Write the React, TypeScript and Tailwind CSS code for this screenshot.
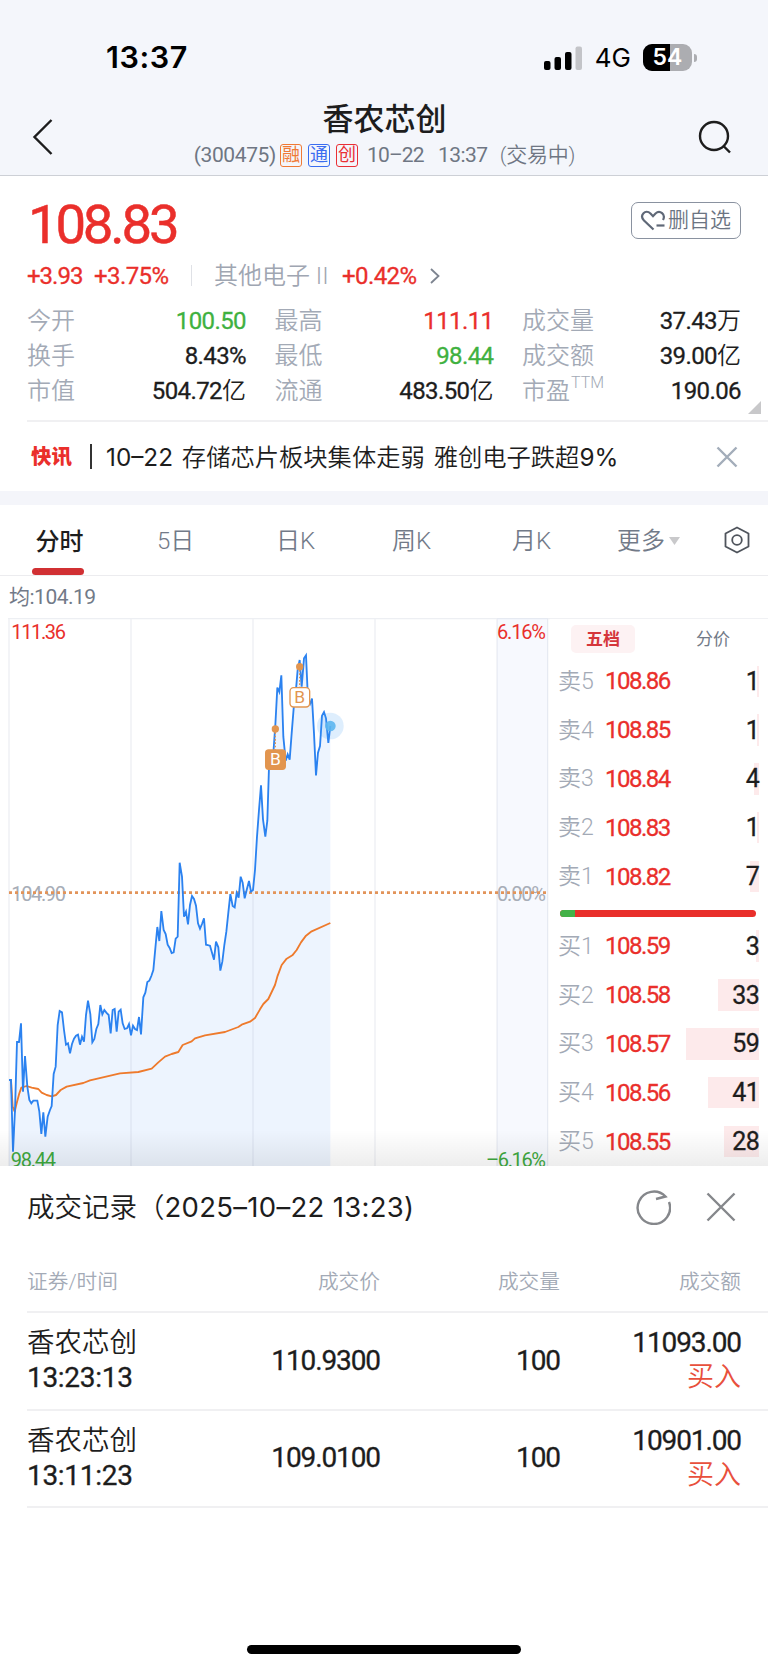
import React from "react";

const quotes = [
	[
		{ label: "今开", value: "100.50", color: "text-[#3fb13f]" },
		{ label: "换手", value: "8.43%", color: "text-[#1d1d1d]" },
		{ label: "市值", value: "504.72", unit: "亿", color: "text-[#1d1d1d]" },
	],
	[
		{ label: "最高", value: "111.11", color: "text-[#ea2f2b]" },
		{ label: "最低", value: "98.44", color: "text-[#3fb13f]" },
		{ label: "流通", value: "483.50", unit: "亿", color: "text-[#1d1d1d]" },
	],
	[
		{ label: "成交量", value: "37.43", unit: "万", color: "text-[#1d1d1d]" },
		{ label: "成交额", value: "39.00", unit: "亿", color: "text-[#1d1d1d]" },
		{ label: "市盈", sup: "TTM", value: "190.06", color: "text-[#1d1d1d]" },
	],
];

const asks = [
	{ label: "卖5", price: "108.86", qty: 1, bar: 2 },
	{ label: "卖4", price: "108.85", qty: 1, bar: 2 },
	{ label: "卖3", price: "108.84", qty: 4, bar: 5 },
	{ label: "卖2", price: "108.83", qty: 1, bar: 2 },
	{ label: "卖1", price: "108.82", qty: 7, bar: 9 },
];

const bids = [
	{ label: "买1", price: "108.59", qty: 3, bar: 3 },
	{ label: "买2", price: "108.58", qty: 33, bar: 41 },
	{ label: "买3", price: "108.57", qty: 59, bar: 73 },
	{ label: "买4", price: "108.56", qty: 41, bar: 51 },
	{ label: "买5", price: "108.55", qty: 28, bar: 35 },
];

const trades = [
	{ name: "香农芯创", time: "13:23:13", price: "110.9300", qty: "100", amount: "11093.00" },
	{ name: "香农芯创", time: "13:11:23", price: "109.0100", qty: "100", amount: "10901.00" },
];

const priceLine =
	"27,1386 33,1386 39,1601 45,1476 51,1272 57,1272 63,1216 69,1421 75,1314 82,1406 88,1446 94,1456 100,1448 112,1448 118,1481 124,1548 130,1483 136,1556 143,1496 150,1476 155,1464 161,1368 167,1346 173,1221 179,1179 186,1183 192,1236 198,1280 204,1276 210,1306 216,1278 222,1262 228,1253 234,1250 240,1280 246,1256 252,1271 258,1191 264,1148 271,1188 277,1273 283,1263 289,1233 295,1218 301,1161 307,1189 313,1176 319,1184 326,1191 332,1246 338,1176 344,1173 350,1241 356,1181 362,1175 368,1216 374,1233 381,1231 387,1218 393,1252 399,1223 405,1233 411,1236 417,1197 423,1249 430,1138 436,1124 442,1092 448,1088 454,1074 460,1056 466,991 472,927 478,969 484,879 491,936 497,948 503,980 509,990 515,1005 521,1003 527,962 533,956 539,734 546,776 552,896 558,881 564,919 570,861 576,834 582,843 588,863 594,916 600,932 606,918 612,901 618,980 630,983 636,1004 642,1025 648,971 655,988 661,1058 667,1031 673,981 679,941 685,884 691,828 698,864 704,868 710,825 716,839 722,776 728,794 734,841 740,816 747,789 753,821 759,816 765,756 771,656 777,576 783,502 789,604 796,656 802,608 807,446 813,426 820,406 826,321 832,209 838,222 844,172 850,356 857,428 863,409 869,425 875,346 881,271 887,226 893,156 899,126 905,206 912,121 918,112 924,246 930,258 936,242 942,346 948,472 954,404 960,384 966,293 972,282 978,301 985,375 991,324";

const avgLine =
	"27,1386 33,1386 38,1466 44,1481 50,1456 58,1426 64,1409 80,1404 95,1409 115,1413 125,1424 140,1431 155,1435 168,1431 182,1416 200,1406 250,1395 270,1387 360,1366 415,1362 455,1352 475,1333 495,1316 515,1308 535,1302 548,1281 575,1270 585,1261 615,1252 675,1242 715,1227 725,1220 750,1211 765,1200 780,1174 790,1158 805,1143 825,1101 832,1076 845,1041 860,1022 877,1012 890,996 903,973 918,953 935,940 991,915";

const StatusBar = () => (
	<div className="flex h-[88px] items-end justify-between pl-[106px] pr-[71px] font-['Inter'] text-black">
		<span className="mb-[16px] text-[30.5px] font-semibold leading-[30px] tracking-[0.6px]">13:37</span>
		<div className="mb-[17px] flex items-center">
			<svg width="39" height="24" viewBox="0 0 39 24">
				<rect x="0" y="15" width="6.5" height="9" rx="2" />
				<rect x="10.5" y="11" width="6.5" height="13" rx="2" />
				<rect x="21" y="6" width="6.5" height="18" rx="2" />
				<rect x="31.5" y="0.5" width="6.5" height="23.5" rx="2" fill="#c3c4c8" />
			</svg>
			<span className="ml-[12px] text-[26px] leading-[26px]">4G</span>
			<div className="relative ml-[12px] flex h-[27px] w-[49px] items-center justify-center overflow-hidden rounded-[9px] bg-[#acadb1]">
				<div className="absolute inset-y-0 left-0 w-[27px] bg-black" />
				<span className="relative text-[23px] font-semibold leading-none text-white">54</span>
			</div>
			<div className="ml-[2px] h-[8px] w-[3px] rounded-r-full bg-[#acadb1]" />
		</div>
	</div>
);

const Header = () => (
	<div className="flex h-[88px] justify-between border-b border-[#cdd0d6] pl-[32px] pr-[36px]">
		<svg className="mt-[30px]" width="22" height="38" viewBox="0 0 22 38" fill="none" stroke="#1d1d1d" strokeWidth="2.4">
			<path d="M19.5 2 L2.5 19 L19.5 36" />
		</svg>
		<div className="ml-[17px] flex flex-col items-center">
			<h1 className="mt-[15px] text-[31px] font-medium leading-[34px] text-[#1d1d1d]">香农芯创</h1>
			<div className="mt-[6px] flex h-[24px] items-center whitespace-pre text-[21px] leading-[24px] text-[#6f7683]">
				<span className="tracking-[-0.4px]">(300475)</span>
				<span className="ml-[4px] flex h-[23px] w-[22px] items-center justify-center rounded-[3px] border-[1.5px] border-[#f07a35] text-[18px] leading-none text-[#f07a35]">融</span>
				<span className="ml-[6px] flex h-[23px] w-[22px] items-center justify-center rounded-[3px] border-[1.5px] border-[#3a6df0] text-[18px] leading-none text-[#3a6df0]">通</span>
				<span className="ml-[6px] flex h-[23px] w-[22px] items-center justify-center rounded-[3px] border-[1.5px] border-[#ea2f35] text-[18px] leading-none text-[#ea2f35]">创</span>
				<span className="ml-[9px] tracking-[-0.8px]">10–22</span>
				<span className="ml-[14px] tracking-[-0.5px]">13:37</span>
				<span className="ml-[12px] font-[350] tracking-[-0.2px]">(交易中)</span>
			</div>
		</div>
		<svg className="mt-[32px]" width="34" height="35" viewBox="0 0 34 35" fill="none" stroke="#1d1d1d" strokeWidth="2.4">
			<circle cx="16" cy="16" r="14" />
			<path d="M25.5 26 L32 32.5" />
		</svg>
	</div>
);

const Summary = () => (
	<div className="relative h-[244px] pl-[27px] pr-[27px]">
		<div className="flex h-[74px] items-start justify-between">
			<span className="ml-px mt-[21px] text-[54.5px] leading-[54px] tracking-[-3.2px] text-[#ea2f2b] [-webkit-text-stroke:0.5px]">108.83</span>
			<button className="mt-[26px] flex h-[37px] w-[110px] items-center rounded-[7px] border-[1.5px] border-[#8a92a0] pl-[8px] text-[21px] font-[350] leading-none text-[#6b7482]">
				<svg width="26" height="22" viewBox="0 0 26 22" fill="none" stroke="#5f6877" strokeWidth="2.2">
					<path d="M13.5 19.5 L4 10.5 C-1 5 5.5 -1 10.5 3.5 L13 6.2 L15.5 3.5 C20 -0.5 26 4.5 23 10" />
					<path d="M16.5 15.5 H24.5" />
				</svg>
				<span className="ml-[2px]">删自选</span>
			</button>
		</div>
		<div className="mt-[9px] flex h-[33px] items-center whitespace-pre text-[24px] leading-none tracking-[-0.6px] text-[#ea2f2b] [-webkit-text-stroke:0.3px]">
			<span className="w-[67px] tracking-[-1px]">+3.93</span>
			<span className="w-[97px]">+3.75%</span>
			<span className="h-[21px] w-px bg-[#dfe1e6]" />
			<span className="ml-[22px] w-[128px] font-[350] tracking-normal text-[#9fa6b2] [-webkit-text-stroke:0px]">其他电子 II</span>
			<span className="w-[87px]">+0.42%</span>
			<svg width="12" height="18" viewBox="0 0 12 18" fill="none" stroke="#7d8490" strokeWidth="1.8">
				<path d="M2 2 L9.5 9 L2 16" />
			</svg>
		</div>
		<div className="mt-[11px] flex justify-between">
			{quotes.map((column, i) => (
				<div key={i} className="w-[219px]">
					{column.map((item) => (
						<div key={item.label} className="flex h-[35px] items-center justify-between text-[24px] leading-none">
							<span className="flex font-[350] text-[#a3aab6]">
								{item.label}
								{item.sup && <span className="-mt-[4px] ml-px text-[16px] font-light leading-none">{item.sup}</span>}
							</span>
							<span className={item.color}>
								<span className="tracking-[-0.6px] [-webkit-text-stroke:0.3px]">{item.value}</span>
								{item.unit && <span className="font-[350]">{item.unit}</span>}
							</span>
						</div>
					))}
				</div>
			))}
		</div>
		<svg className="absolute bottom-[6px] right-[7px]" width="13" height="13" viewBox="0 0 13 13" fill="#c8c8ca">
			<path d="M13 0 V13 H0 Z" />
		</svg>
	</div>
);

const News = () => (
	<div className="ml-[27px] flex h-[71px] items-center border-t-2 border-[#f0f0f2] pl-[4px] pr-[30px]">
		<span className="mt-[2px] text-[20.5px] font-black leading-none text-[#ea2f2b]">快讯</span>
		<span className="ml-[18px] h-[25px] w-[2px] bg-[#333]" />
		<span className="ml-[14px] mt-[2px] whitespace-pre font-['Inter','Noto_Sans_CJK_SC',sans-serif] text-[24.3px] font-[350] leading-none text-[#1d1d1d] [word-spacing:2px]">
			<span className="font-normal">10–22</span> 存储芯片板块集体走弱 雅创电子跌超<span className="font-normal">9%</span>
		</span>
		<svg className="ml-auto" width="22" height="22" viewBox="0 0 22 22" stroke="#a3adba" strokeWidth="2.4">
			<path d="M1.5 1.5 L20.5 20.5 M20.5 1.5 L1.5 20.5" />
		</svg>
	</div>
);

const Tabs = () => (
	<div className="flex h-[71px] items-center border-b border-[#ececef] pt-[2px] text-[24px] font-[350] leading-none text-[#727a88]">
		<div className="ml-[32px] flex h-full w-[52px] flex-col items-center justify-end font-medium text-[#1d1d1d]">
			<span className="mb-[14px] ml-[3px]">分时</span>
			<span className="h-[7px] w-[52px] rounded-full bg-[#d13033]" />
		</div>
		<span className="ml-[73px] w-[119px]">5日</span>
		<span className="w-[116px]">日K</span>
		<span className="w-[120px]">周K</span>
		<span className="w-[105px]">月K</span>
		<span>更多</span>
		<svg className="ml-[4px]" width="11" height="8" viewBox="0 0 11 8" fill="#c9c9cb">
			<path d="M0 0 H11 L5.5 8 Z" />
		</svg>
		<svg className="-mt-[2px] ml-auto mr-[18px]" width="26" height="28" viewBox="0 0 26 28" fill="none" stroke="#4f545c" strokeWidth="1.8">
			<path d="M13 1.5 L24.5 7.5 V20.5 L13 26.5 L1.5 20.5 V7.5 Z" strokeLinejoin="round" />
			<circle cx="13" cy="14" r="4.8" />
		</svg>
	</div>
);

const Chart = () => (
	<svg className="shrink-0 font-['Roboto']" width="550" height="548" viewBox="0 0 1650 1644">
		<rect x="1491" y="0" width="153" height="1644" fill="#f7f9fe" />
		<polygon points={`27,1644 ${priceLine} 991,1644`} fill="#edf4fe" />
		<path d="M27 0 V1644 M393 0 V1644 M759 0 V1644 M1125 0 V1644 M1491 0 V1644 M1643 0 V1644 M24 1.5 H1650" stroke="#8c9bb5" strokeOpacity="0.16" strokeWidth="4" />
		<g fontSize="60">
			<text x="34" y="64" fill="#ea2f2b" textLength="164">111.36</text>
			<text x="1491" y="64" fill="#ea2f2b" textLength="147">6.16%</text>
			<text x="34" y="849" fill="#a7adb7" textLength="164">104.90</text>
			<text x="1491" y="849" fill="#a7adb7" textLength="147">0.00%</text>
			<text x="32" y="1646" fill="#3fa93f" textLength="136">98.44</text>
			<text x="1458" y="1646" fill="#3fa93f" textLength="180">–6.16%</text>
		</g>
		<path d="M27 824 H1644" stroke="#e2945a" strokeWidth="8" strokeDasharray="9 9" />
		<polyline points={avgLine} fill="none" stroke="#ee7a2c" strokeWidth="5.5" strokeLinejoin="round" />
		<polyline points={priceLine} fill="none" stroke="#2b82f0" strokeWidth="5.5" />
		<circle cx="991" cy="324" r="40" fill="#3d9cf5" fillOpacity="0.17" />
		<circle cx="991" cy="324" r="16" fill="#5cb6f0" fillOpacity="0.9" />
		<g stroke="#e2954f" strokeWidth="4" fill="none">
			<path d="M826 333 V395 M899 146 V208" strokeDasharray="5 5" />
			<rect x="797" y="396" width="59" height="58" rx="9" fill="#e2954f" />
			<rect x="870" y="209" width="59" height="58" rx="11" fill="#fff" />
		</g>
		<circle cx="826" cy="333" r="11" fill="#e2954f" />
		<circle cx="899" cy="146" r="11" fill="#e2954f" />
		<text x="826" y="441" fontSize="52" fill="#fff" textAnchor="middle">B</text>
		<text x="899" y="256" fontSize="52" fill="#e2954f" textAnchor="middle">B</text>
	</svg>
);

const Level = ({ label, price, qty, bar }: { label: string; price: string; qty: number; bar: number }) => (
	<div className="relative flex h-[48.8px] items-center text-[24px] leading-none">
		<div className="absolute right-[9px] top-[8.5px] h-[31.5px] bg-[#fdeaeb]" style={{ width: bar }} />
		<span className="w-[47px] text-[23px] font-[350] text-[#a3aab6]">{label}</span>
		<span className="tracking-[-1.5px] text-[#ea2f2b] [-webkit-text-stroke:0.3px]">{price}</span>
		<span className="relative ml-auto mr-[9px] text-[25px] tracking-[-0.7px] text-[#1d1d1d] [-webkit-text-stroke:0.3px]">{qty}</span>
	</div>
);

const OrderBook = () => (
	<div className="h-[548px] flex-1 overflow-hidden border-t border-[#f0f1f4] pl-[8px]">
		<div className="flex h-[38px] items-center text-[17px] leading-none">
			<span className="ml-[13px] mt-[2px] flex h-[28px] w-[64px] items-center justify-center rounded-[5px] bg-[#fdf2f3] font-bold text-[#d5363b]">五档</span>
			<span className="ml-[61px] mt-[2px] text-[#727a88]">分价</span>
		</div>
		{asks.map((row) => (
			<Level key={row.label} {...row} />
		))}
		<div className="mb-[5px] ml-[2px] mt-[9px] flex h-[7px] w-[196px] overflow-hidden rounded-full bg-[#e92f2a]">
			<div className="w-[15px] bg-[#44b248]" />
		</div>
		{bids.map((row) => (
			<Level key={row.label} {...row} />
		))}
	</div>
);

const TradeSheet = () => (
	<div className="relative h-[503px] bg-white text-[#1d1d1d]">
		<div className="flex h-[84px] items-center pl-[27px] pr-[32px]">
			<span className="whitespace-pre font-['Inter','Noto_Sans_CJK_SC',sans-serif] text-[27.5px] font-[350] leading-none">
				成交记录（<span className="font-normal tracking-[0.3px]">2025–10–22 13:23)</span>
			</span>
			<svg className="-mt-[3px] ml-auto" width="36" height="36" viewBox="0 0 36 36" fill="none" stroke="#85878b" strokeWidth="2.4">
				<path d="M34 13 A16.2 16.2 0 1 1 30.5 7.5 L21 10" />
			</svg>
			<svg className="-mt-[3px] ml-[35px]" width="30" height="30" viewBox="0 0 30 30" stroke="#85878b" strokeWidth="2.4">
				<path d="M1.5 1.5 L28.5 28.5 M28.5 1.5 L1.5 28.5" />
			</svg>
		</div>
		<div className="ml-[27px]">
			<div className="grid h-[63px] grid-cols-[173px_180px_180px_181px] items-center border-b-2 border-[#f0f0f2] pt-[3px] text-right text-[20.7px] font-[350] leading-none text-[#a3aab6]">
				<span className="text-left">证券/时间</span>
				<span>成交价</span>
				<span>成交量</span>
				<span>成交额</span>
			</div>
			{trades.map((trade) => (
				<div key={trade.time} className="grid h-[97.5px] grid-cols-[173px_180px_180px_181px] items-center border-b-2 border-[#f0f0f2] pb-px text-right text-[28px] leading-[35px] tracking-[-1.1px] [-webkit-text-stroke:0.3px]">
					<div className="text-left">
						<div className="text-[27.5px] font-[350] tracking-normal [-webkit-text-stroke:0px]">{trade.name}</div>
						<div className="tracking-[-0.3px]">{trade.time}</div>
					</div>
					<span>{trade.price}</span>
					<span>{trade.qty}</span>
					<div>
						<div>{trade.amount}</div>
						<div className="text-[27px] font-[350] tracking-normal text-[#e8503c] [-webkit-text-stroke:0px]">买入</div>
					</div>
				</div>
			))}
		</div>
	</div>
);

const App = () => {
	return (
		<div className="flex h-[1669px] w-[768px] flex-col overflow-hidden bg-white font-['Roboto','Noto_Sans_CJK_SC',sans-serif]">
			<div className="bg-[#f4f6fb]">
				<StatusBar />
				<Header />
			</div>
			<Summary />
			<News />
			<div className="h-[14px] bg-[#f4f5fa]" />
			<Tabs />
			<div className="flex h-[42px] items-center pl-[9px] text-[21px] leading-none tracking-[-0.5px] text-[#727a88]">均:104.19</div>
			<div className="relative flex h-[548px]">
				<Chart />
				<OrderBook />
				<div className="absolute inset-x-0 bottom-0 h-[36px] bg-linear-to-t from-black/7 to-transparent" />
			</div>
			<TradeSheet />
			<div className="relative -mt-[24px] ml-[247px] h-[9px] w-[274px] shrink-0 rounded-full bg-black" />
		</div>
	);
};

export default App;
